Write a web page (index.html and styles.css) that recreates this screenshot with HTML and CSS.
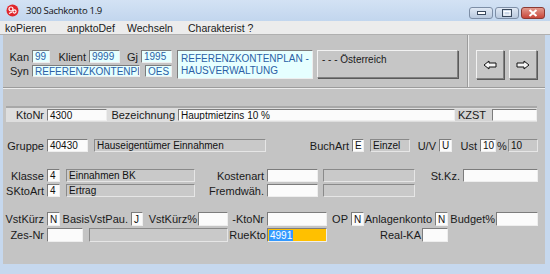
FILE: index.html
```html
<!DOCTYPE html>
<html lang="de">
<head>
  <meta charset="UTF-8" />
  <title>300 Sachkonto 1.9</title>
  <link rel="stylesheet" href="styles.css">
</head>
<body>
  <div class="window">
    <div class="titlebar">
      <span class="app-icon">
        <svg width="13" height="13" viewBox="0 0 13 13">
          <circle cx="6.5" cy="6.5" r="6" fill="#e0262c"/>
          <circle cx="5" cy="5" r="2" fill="none" stroke="#fff" stroke-width="1.2"/>
          <circle cx="8.5" cy="7.5" r="1.6" fill="none" stroke="#fff" stroke-width="1.1"/>
          <path d="M3 9.5 L6 8" stroke="#fff" stroke-width="1.1"/>
        </svg>
      </span>
      <span class="title">300 Sachkonto 1.9</span>
      <div class="win-buttons">
        <span class="wbtn">
          <svg width="9" height="4" viewBox="0 0 9 4"><rect x="0.5" y="0.5" width="8" height="3" fill="#fff" stroke="#3b4a5e"/></svg>
        </span>
        <span class="wbtn">
          <svg width="10" height="8" viewBox="0 0 10 8"><rect x="0.5" y="0.5" width="9" height="7" fill="none" stroke="#3b4a5e"/><rect x="2" y="2.5" width="6" height="3.5" fill="none" stroke="#fff"/></svg>
        </span>
        <span class="wbtn close">
          <svg width="10" height="8" viewBox="0 0 10 8"><path d="M1.5 1 L8.5 7 M8.5 1 L1.5 7" stroke="#fff" stroke-width="2"/></svg>
        </span>
      </div>
    </div>

    <div class="menubar">
      <span>koPieren</span>
      <span>anpktoDef</span>
      <span>Wechseln</span>
      <span>Charakterist ?</span>
    </div>

    <div class="client">
      <!-- Kopfbereich -->
      <div class="top-panel">
        <div class="top-left">
          <div class="kan-block">
            <div class="row row-kan">
              <span class="lbl">Kan</span>
              <span class="fld cyan">99</span>
              <span class="lbl">Klient</span>
              <span class="fld cyan">9999</span>
              <span class="lbl">Gj</span>
              <span class="fld cyan">1995</span>
            </div>
            <div class="row row-syn">
              <span class="lbl">Syn</span>
              <span class="fld cyan">REFERENZKONTENPLA</span>
              <span></span>
              <span class="fld cyan">OES</span>
            </div>
          </div>
          <div class="fld cyan memo">REFERENZKONTENPLAN -<br>HAUSVERWALTUNG</div>
          <div class="raised land">- - - Österreich</div>
        </div>
        <div class="top-right">
          <span class="raised arrow">
            <svg width="14" height="10" viewBox="0 0 14 10"><path d="M1 5 L6 1 L6 3 L13 3 L13 7 L6 7 L6 9 Z" fill="#f4f4f4" stroke="#111"/></svg>
          </span>
          <span class="raised arrow">
            <svg width="14" height="10" viewBox="0 0 14 10"><path d="M13 5 L8 1 L8 3 L1 3 L1 7 L8 7 L8 9 Z" fill="#f4f4f4" stroke="#111"/></svg>
          </span>
        </div>
      </div>

      <!-- Konto -->
      <div class="band">
        <span class="lbl">KtoNr</span>
        <span class="fld">4300</span>
        <span class="lbl">Bezeichnung</span>
        <span class="fld">Hauptmietzins 10 %</span>
        <span class="lbl kz">KZST</span>
        <span class="fld"></span>
      </div>

      <div class="row row-gruppe">
        <span class="lbl">Gruppe</span>
        <span class="fld">40430</span>
        <span></span>
        <span class="fld grey">Hauseigentümer Einnahmen</span>
        <span class="lbl">BuchArt</span>
        <span class="fld">E</span>
        <span></span>
        <span class="fld grey">Einzel</span>
        <span class="lbl">U/V</span>
        <span class="fld">U</span>
        <span class="lbl">Ust</span>
        <span class="fld">10</span>
        <span class="lbl pct">%</span>
        <span class="fld grey">10</span>
      </div>

      <div class="group">
        <div class="row row-klasse">
          <span class="lbl">Klasse</span>
          <span class="fld">4</span>
          <span></span>
          <span class="fld grey">Einnahmen BK</span>
          <span class="lbl">Kostenart</span>
          <span class="fld"></span>
          <span></span>
          <span class="fld grey"></span>
          <span class="lbl">St.Kz.</span>
          <span class="fld"></span>
        </div>
        <div class="row row-sktoart">
          <span class="lbl">SKtoArt</span>
          <span class="fld">4</span>
          <span></span>
          <span class="fld grey">Ertrag</span>
          <span class="lbl">Fremdwäh.</span>
          <span class="fld"></span>
          <span></span>
          <span class="fld grey"></span>
        </div>
      </div>

      <div class="group">
        <div class="row row-vst">
          <span class="lbl">VstKürz</span>
          <span class="fld">N</span>
          <span class="lbl">BasisVstPau.</span>
          <span class="fld">J</span>
          <span class="lbl tight">VstKürz%</span>
          <span class="fld"></span>
          <span class="lbl">-KtoNr</span>
          <span class="fld"></span>
          <span class="lbl">OP</span>
          <span class="fld">N</span>
          <span class="lbl">Anlagenkonto</span>
          <span class="fld">N</span>
          <span class="lbl tight">Budget%</span>
          <span class="fld"></span>
        </div>
        <div class="row row-zes">
          <span class="lbl">Zes-Nr</span>
          <span class="fld"></span>
          <span></span>
          <span class="fld grey"></span>
          <span class="lbl tight">RueKto</span>
          <span class="fld orange"><span class="sel">4991</span></span>
          <span class="lbl tight">Real-KA</span>
          <span class="fld"></span>
        </div>
      </div>
    </div>
  </div>
</body>
</html>
```

FILE: styles.css
```css
* {
  box-sizing: border-box;
  margin: 0;
  padding: 0;
}

body {
  width: 550px;
  height: 274px;
  overflow: hidden;
  background-color: #cfdded;
  font-family: "Liberation Sans", Arial, sans-serif;
  font-size: 11px;
  color: #1a1a1a;
}

.window {
  width: 550px;
  height: 274px;
  background-color: #c6d8ee;
}

/* Titelleiste */
.titlebar {
  height: 21px;
  display: flex;
  align-items: center;
  padding-left: 6px;
  background: linear-gradient(#d3e2f4, #c2d6ee);
}

.app-icon {
  display: flex;
  width: 13px;
  height: 13px;
}

.title {
  margin-left: 7px;
  font-family: "Open Sans", sans-serif;
  font-size: 9.5px;
  letter-spacing: -0.3px;
  color: #111;
}

.win-buttons {
  margin-left: auto;
  margin-right: 5px;
  display: flex;
  gap: 2px;
  align-self: flex-start;
  margin-top: 7px;
}

.wbtn {
  width: 24px;
  height: 12px;
  display: flex;
  align-items: center;
  justify-content: center;
  border: 1px solid #7d8ea6;
  border-radius: 3px;
  background: linear-gradient(#dfe8f4, #b9c9de);
}

.wbtn.close {
  border-color: #8b3a33;
  background: linear-gradient(#e39a8e, #c8463a);
}

/* Menü */
.menubar {
  height: 14px;
  display: grid;
  grid-template-columns: 62px 60px 61px auto;
  align-items: center;
  padding-left: 5px;
  font-size: 10.5px;
  background-color: #ececec;
  border-bottom: 1px solid #b0b0b0;
}

/* Formularbereich */
.client {
  margin-left: 3px;
  width: 542px;
  height: 229px;
  background-color: #c4c4c4;
}

.row {
  display: grid;
  height: 13px;
}

.lbl {
  display: flex;
  align-items: center;
  justify-content: flex-end;
  padding-right: 3px;
  white-space: nowrap;
}

.lbl.tight {
  padding-right: 1px;
}

.fld {
  display: flex;
  align-items: center;
  padding-left: 2px;
  overflow: hidden;
  white-space: nowrap;
  font-size: 10px;
  background-color: #fbfbfb;
  border: 1px solid;
  border-color: #7c7c7c #eeeeee #eeeeee #7c7c7c;
  color: #111;
}

.fld.cyan {
  background-color: #e6ffff;
  color: #2b5fa6;
}

.fld.grey {
  background-color: #c9c9c9;
  border-color: #8a8a8a #e6e6e6 #e6e6e6 #8a8a8a;
}

.fld.orange {
  background-color: #ffc000;
  padding-left: 1px;
}

.sel {
  background-color: #3399ff;
  color: #fff;
  padding: 0 1px;
  line-height: 11px;
}

.raised {
  background-color: #c6c6c6;
  border: 1px solid;
  border-color: #f2f2f2 #808080 #808080 #f2f2f2;
  box-shadow: 1px 1px 0 #5a5a5a;
}

/* Kopfbereich */
.top-panel {
  display: flex;
  height: 53px;
  border-bottom: 1px solid #9c9c9c;
  box-shadow: 0 1px 0 #ececec;
}

.top-left {
  width: 465px;
  display: flex;
  align-items: flex-start;
  padding-top: 15px;
  border-right: 1px solid #9c9c9c;
  box-shadow: 1px 0 0 #ececec;
}

.kan-block {
  display: flex;
  flex-direction: column;
  gap: 2px;
  width: 169px;
}

.row-kan { grid-template-columns: 29px 18px 39px 31px 21px 31px; }
.row-syn { grid-template-columns: 29px 108px 5px 27px; height: 12px; }

.memo {
  margin-left: 5px;
  width: 136px;
  height: 29px;
  display: block;
  padding: 2px 3px;
  line-height: 12px;
}

.land {
  margin-left: 4px;
  width: 141px;
  height: 28px;
  padding: 3px 4px;
  font-size: 10px;
}

.top-right {
  display: flex;
  gap: 5px;
  padding: 15px 0 0 8px;
}

.arrow {
  width: 28px;
  height: 29px;
  display: flex;
  align-items: center;
  justify-content: center;
}

/* Kontozeile */
.band {
  display: grid;
  grid-template-columns: 41px 60px 71px 277px 37px 45px;
  margin: 18px 0 0 3px;
  width: 531px;
  height: 16px;
  padding: 1px 0 2px;
  background-color: #dedede;
  border-top: 2px solid #a8a8a8;
}

.band .lbl.kz {
  justify-content: center;
  background-color: #d4d4d4;
}

.row-gruppe {
  margin-top: 17px;
  grid-template-columns: 44px 41px 6px 172px 86px 12px 6px 40px 29px 13px 28px 16px 12px 30px;
}

.lbl.pct {
  justify-content: center;
  padding-right: 0;
}

.group {
  display: flex;
  flex-direction: column;
  gap: 2px;
  margin-top: 17px;
}

.row-klasse { grid-template-columns: 44px 13px 6px 129px 72px 51px 5px 92px 48px 75px; }
.row-sktoart { grid-template-columns: 44px 13px 6px 129px 72px 51px 5px 92px; }

.group + .group {
  margin-top: 15px;
}

.row-vst { grid-template-columns: 44px 13px 71px 12px 55px 30px 39px 60px 24px 13px 71px 13px 48px 42px; height: 14px; }
.row-zes { grid-template-columns: 44px 36px 6px 139px 39px 60px 95px 26px; height: 14px; }
```
